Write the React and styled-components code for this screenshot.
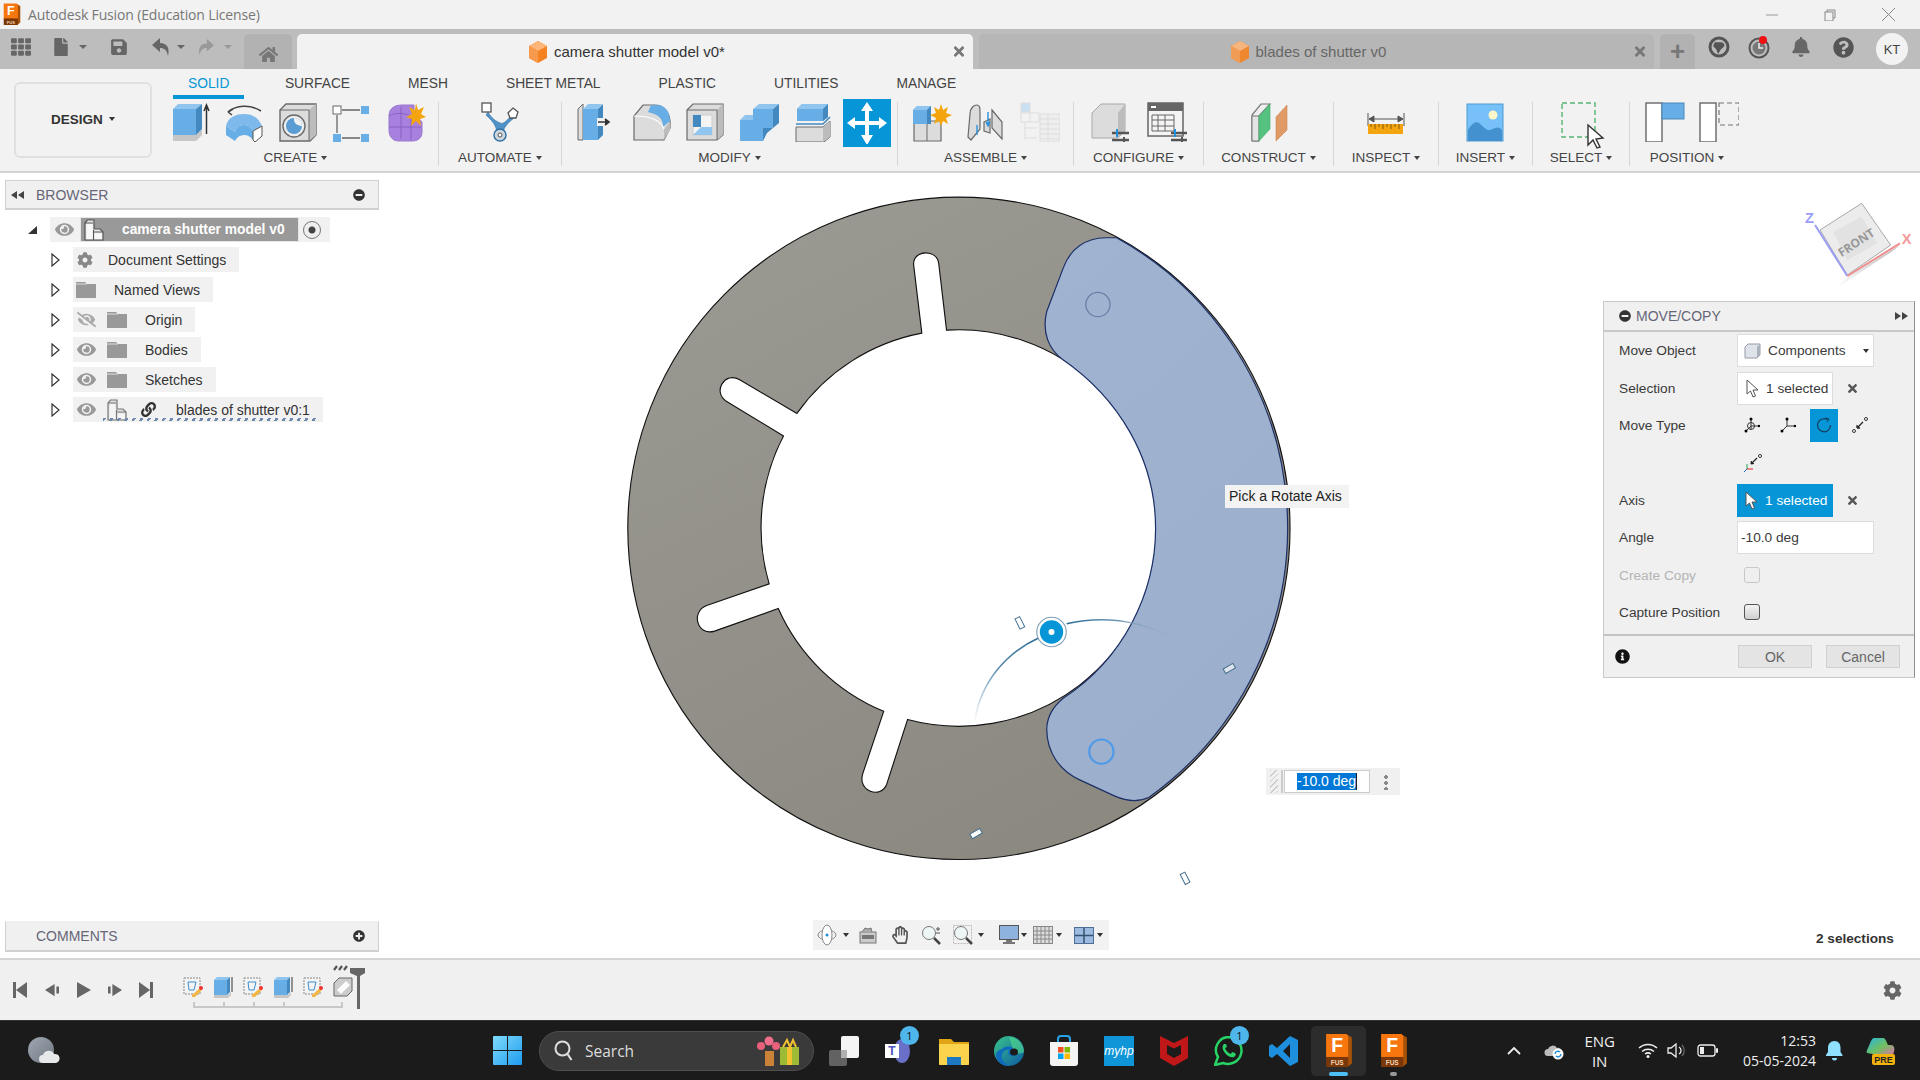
import React from 'react';
import styled, { createGlobalStyle } from 'styled-components';
import {
  FaBell, FaCog, FaEye, FaEyeSlash, FaFile, FaHome, FaInfoCircle, FaLink, FaMinusCircle,
  FaPlusCircle, FaQuestionCircle, FaRegHandPaper, FaSave, FaTh, FaTimes,
} from 'react-icons/fa';

const Global = createGlobalStyle`
  html, body { margin: 0; padding: 0; background: #fff; }
  * { box-sizing: border-box; }
  body { font-family: "Liberation Sans", Arial, sans-serif; }
`;

const Screen = styled.div`
  width: 1920px;
  height: 1080px;
  display: flex;
  flex-direction: column;
  overflow: hidden;
  color: #444;
`;

/* ---------- title bar ---------- */
const TitleBar = styled.div`
  height: 29px;
  background: #f2f2f2;
  display: flex;
  align-items: center;
  padding-left: 3px;
`;
const TitleText = styled.span`
  margin-left: 7px;
  font: 14px "Open Sans", sans-serif;
  letter-spacing: -0.15px;
  color: #777;
`;
const WinControls = styled.div`
  margin-left: auto;
  display: flex;
  align-items: center;
  padding-right: 25px;
  gap: 46px;
  color: #888;
`;

/* ---------- tab strip ---------- */
const TabStrip = styled.div`
  height: 40px;
  background: #bdbdbd;
  display: flex;
  align-items: flex-end;
  padding-left: 11px;
`;
const ToolIcon = styled.div`
  height: 40px;
  display: flex;
  align-items: center;
  margin-left: ${p => p.$ml || 0}px;
  color: ${p => p.$color || '#666'};
  font-size: ${p => p.$size || 18}px;
  padding-bottom: 4px;
`;
const Caret = styled.i`
  display: inline-block;
  width: 0;
  height: 0;
  border-left: ${p => p.$s || 3.5}px solid transparent;
  border-right: ${p => p.$s || 3.5}px solid transparent;
  border-top: ${p => (p.$s || 3.5) * 1.2}px solid ${p => p.$color || '#444'};
  margin-left: ${p => p.$ml ?? 4}px;
  vertical-align: middle;
`;
const HomeTab = styled.div`
  width: 48px;
  height: 35px;
  margin-left: 12px;
  background: #b2b2b2;
  border-radius: 5px 5px 0 0;
  display: flex;
  align-items: center;
  justify-content: center;
  padding-top: 6px;
  color: #777;
  font-size: 19px;
`;
const Tab = styled.div`
  width: ${p => p.$w}px;
  height: 35px;
  margin-left: ${p => p.$ml}px;
  background: ${p => (p.$active ? '#f2f2f2' : '#b6b6b6')};
  border-radius: 5px 5px 0 0;
  display: flex;
  align-items: center;
  padding-left: 4px;
  padding-right: 7px;
  font-size: 15px;
  color: ${p => (p.$active ? '#333' : '#666')};
`;
const TabLabel = styled.div`
  flex: 1;
  display: flex;
  align-items: center;
  justify-content: center;
  gap: 6px;
`;
const TabClose = styled.div`
  width: 14px;
  display: flex;
  justify-content: center;
  color: #777;
`;
const PlusTab = styled(HomeTab)`
  width: 35px;
  margin-left: 6px;
  padding-top: 0;
  font-size: 26px;
  font-weight: 700;
`;
const Avatar = styled.div`
  width: 32px;
  height: 32px;
  border-radius: 50%;
  background: #f2f2f2;
  margin-left: 22px;
  margin-bottom: 4px;
  display: flex;
  align-items: center;
  justify-content: center;
  color: #444;
  font-size: 13px;
`;

/* ---------- ribbon ---------- */
const Ribbon = styled.div`
  height: 104px;
  background: #f2f2f2;
  border-bottom: 2px solid #d4d4d4;
  display: flex;
`;
const DesignButton = styled.div`
  width: 138px;
  height: 76px;
  margin: 13px 0 0 14px;
  padding-bottom: 2px;
  border: 2px solid #e0e0e0;
  border-radius: 6px;
  display: flex;
  align-items: center;
  justify-content: center;
  font-size: 13.5px;
  font-weight: 700;
  color: #333;
`;
const RibbonMain = styled.div`
  display: flex;
  flex-direction: column;
`;
const RibbonTabs = styled.div`
  height: 30px;
  display: flex;
  padding-left: 12px;
  margin-left: 9px;
`;
const RibbonTab = styled.div`
  height: 30px;
  padding: 7px 15px 0;
  margin-right: ${p => (p.$active ? 25.500 : 28)}px;
  font-size: 13.8px;
  line-height: 15px;
  color: ${p => (p.$active ? '#0696d7' : '#444')};
  border-bottom: 4px solid ${p => (p.$active ? '#0696d7' : 'transparent')};
`;
const Groups = styled.div`
  display: flex;
  padding-left: 9px;
`;
const Group = styled.div`
  width: ${p => p.$w}px;
  height: 64px;
  margin-top: 3px;
  padding-right: ${p => p.$pr || 0}px;
  border-right: ${p => (p.$last ? 'none' : '1.5px solid #d6d6d6')};
  display: flex;
  flex-direction: column;
  align-items: center;
`;
const GroupIcons = styled.div`
  height: 47px;
  display: flex;
  align-items: flex-start;
  gap: ${p => p.$gap ?? 14}px;
  margin-left: ${p => p.$ml || 0}px;
`;
const GroupLabel = styled.div`
  font-size: 13.5px;
  line-height: 17px;
  color: #444;
  white-space: nowrap;
`;
const RIcon = styled.svg`
  width: 40px;
  height: 40px;
  flex: none;
  margin-left: ${p => p.$ml || 0}px;
`;
const ActiveTool = styled.div`
  width: 48px;
  height: 48px;
  margin: -3px 0 0 -4px;
  background: #0696d7;
  display: flex;
  align-items: center;
  justify-content: center;
`;

const R = ({ children, $ml }) => <RIcon viewBox="0 0 40 40" $ml={$ml}>{children}</RIcon>;
const BLUE = '#68aee6', DK = '#4389c0', LT = '#8fc5ee', GL = '#dcdcdc', GM = '#bcbcbc', ST = '#6a6a6a';

const Extrude = () => (
  <R>
    <path d="M3 33h23l6-6v6l-6 6H3z" fill="#c6c6c6" />
    <rect x="3" y="7" width="23" height="26" fill={BLUE} />
    <path d="M3 7l5-5h24l-6 5z" fill={LT} />
    <path d="M26 7l6-5v25l-6 6z" fill={DK} />
    <path d="M36.5 32V4M34 9l2.500-6L39 9" stroke="#333" strokeWidth="1.500" fill="none" />
  </R>
);
const Revolve = () => (
  <R>
    <path d="M2 24C4 15 12 12 20 12s14 3 18 12l-9 5c-2-4-5-6-9-6s-8 2-9 7z" fill="#7dbaeb" />
    <path d="M2 24l9 6c1-5 5-7 9-7s7 2 9 6v9c-2-3-5-5-9-5s-7 2-9 6l-9-6z" fill={BLUE} />
    <path d="M29 29l9-5v10l-7 6-2-2z" fill="#fff" stroke="#555" />
    <path d="M4 10C12 3 26 2 37 9" stroke="#444" strokeWidth="1.500" fill="none" />
    <path d="M4 10l5-3M4 10l4 3" stroke="#444" strokeWidth="1.500" fill="none" />
  </R>
);
const Hole = () => (
  <R>
    <path d="M2 8l6-6h30v31l-6 6H2z" fill={GL} stroke={ST} strokeWidth="1.400" />
    <path d="M31 8l7-6v31l-7 6z" fill={GM} />
    <path d="M2 8h29v31" stroke={ST} fill="none" />
    <circle cx="16" cy="24" r="11" fill="#eee" stroke={ST} strokeWidth="1.400" />
    <circle cx="16" cy="24" r="8" fill="#5a9dd4" />
    <path d="M16 16a8 8 0 0 1 8 8c-3 0-9-2-8-8z" fill="#f2f2f2" />
  </R>
);
const SketchBox = () => (
  <R>
    <rect x="1" y="4" width="8" height="8" fill="#fff" stroke="#666" />
    <rect x="29" y="4" width="8" height="8" fill={BLUE} />
    <rect x="1" y="32" width="8" height="8" fill={BLUE} />
    <rect x="29" y="32" width="8" height="8" fill={BLUE} />
    <path d="M10 8h18M5 13v18M10 36h18" stroke="#666" strokeWidth="1.300" />
  </R>
);
const FormIcon = () => (
  <R>
    <path d="M3 14C3 6 9 3 16 3h12v8l8 9v10c0 6-4 9-10 9H13C6 39 3 34 3 28z" fill="#a781dd" stroke="#9a78cf" />
    <path d="M3 14c6-4 16-3 22 0M15 5v32M3 25h32M25 14v24" stroke="#8a63c4" strokeWidth="1" fill="none" />
    <path d="M30 1l2 7 6-3-3 7 5 3-6 2 1 7-5-5-5 5 1-7-6-2 6-3-3-7 6 3z" fill="#f4a50e" />
  </R>
);
const AutomateIcon = () => (
  <R>
    <path d="M8 10c4 7 8 9 12 11s8-4 12-8l2 3c-4 3-8 7-10 11l-1 5h-6l-1-6C14 20 9 16 6 13z" fill="#4f92c8" stroke="#2f6fa3" strokeWidth=".6" />
    <rect x="2" y="1" width="9" height="9" fill="#fff" stroke="#555" strokeWidth="1.300" />
    <path d="M33 6l5 4-2 6-6 0-2-5z" fill="#fff" stroke="#555" strokeWidth="1.300" />
    <circle cx="20" cy="33" r="6" fill="#cfd6dc" stroke="#2f6fa3" strokeWidth="1.400" />
    <circle cx="20" cy="33" r="2" fill="#fff" stroke="#555" />
  </R>
);
const PressPull = () => (
  <R>
    <path d="M6 7l5-5v36H6z" fill={GL} stroke={ST} />
    <path d="M11 7h15v31H11z" fill={BLUE} />
    <path d="M11 7l5-5h14l-4 5z" fill={LT} />
    <path d="M26 7l5-5v31l-5 5z" fill={DK} />
    <rect x="25" y="16" width="13" height="8" fill="#f2f2f2" />
    <path d="M26 20h10M33 17l4 3-4 3" stroke="#333" strokeWidth="1.600" fill="#333" />
  </R>
);
const Fillet = () => (
  <>
    <path d="M3 38V14l9-11h12c8 0 14 6 15 16v7l-6 12z" fill={GL} stroke={ST} strokeWidth="1.200" />
    <path d="M20 3h6c8 0 13 7 13 16l-7 6c0-8-4-12-12-14l-3-1z" fill={BLUE} />
    <path d="M33 38v-11l6-7v8z" fill={GM} />
    <path d="M3 14c13 0 26 2 30 13" stroke="#fff" strokeWidth="1.200" fill="none" />
  </>
);
const Shell = () => (
  <R>
    <path d="M2 8l6-6h30v31l-6 5H2z" fill={GL} stroke={ST} strokeWidth="1.200" />
    <path d="M32 8l6-6v31l-6 5z" fill={GM} />
    <path d="M2 8h30v30" stroke={ST} fill="none" />
    <rect x="8" y="13" width="19" height="20" fill="#f4f4f4" stroke="#ccc" />
    <path d="M8 13h8v12H8z" fill={DK} />
    <path d="M8 33l8-8h11v8z" fill={LT} />
  </R>
);
const Combine = () => (
  <R>
    <path d="M1 18h13V7h20v19H24v13H1z" fill={BLUE} />
    <path d="M14 7l6-5h20l-6 5z" fill={LT} />
    <path d="M1 18l5-5h8v5z" fill={LT} />
    <path d="M34 7l6-5v19l-6 5z" fill={DK} />
    <path d="M24 26h10l-6 5-4 8z" fill={DK} />
  </R>
);
const SplitBody = () => (
  <R>
    <path d="M4 7l5-5h26v13l-5 4H4z" fill={BLUE} />
    <path d="M4 7l5-5h26l-5 5z" fill={LT} />
    <path d="M30 7l5-5v13l-5 4z" fill={DK} />
    <path d="M3 22h27l7-7" stroke={DK} strokeWidth="1.600" fill="none" />
    <path d="M3 25h27l7-6v16l-6 5H3z" fill={GL} stroke={ST} />
    <path d="M30 25l7-6v16l-7 5z" fill={GM} />
  </R>
);
const MoveArrows = () => (
  <svg width="40" height="42" viewBox="0 0 40 42">
    <path fill="#fff" d="M20 0l6 9h-4v10h10v-4l8 6-8 6v-4H22v10h4l-6 10-6-10h4V23H8v4L0 21l8-6v4h10V9h-4z" />
  </svg>
);
const NewComponent = () => (
  <R>
    <path d="M2 22l3-3h24v20H2z" fill={GL} stroke={ST} strokeWidth="1.200" />
    <path d="M15 22v17" stroke={ST} />
    <path d="M1 22V8l4-4h14v18z" fill={BLUE} />
    <path d="M1 8l4-4h14l-4 4z" fill={LT} />
    <path d="M15 8l4-4v18h-4z" fill={DK} />
    <path d="M29 2l2 6 5-3-2 6 6 2-6 3 2 6-5-3-2 5-2-5-5 3 2-6-6-3 6-2-2-6 5 3z" fill="#f4a50e" />
  </R>
);
const Joint = () => (
  <R>
    <path d="M4 12c0-6 4-9 7-9s3 3 3 8v16l-9 11-3-3z" fill={GL} stroke={ST} strokeWidth="1.200" />
    <path d="M18 20l6-3v14l-6-2zM26 8l10 12v17L26 26z" fill={GL} stroke={ST} strokeWidth="1.200" />
    <path d="M11 23v10M22 10v12M20 20l2 4 2-4" stroke="#2a8fdb" strokeWidth="1.400" fill="none" />
  </R>
);
const TableFaded = () => (
  <R>
    <rect x="1" y="1" width="9" height="9" fill="#c9dff2" stroke="#ddd" />
    <path d="M1 11h18v9H1zM10 11v9M5 20v18M5 26h12M5 36h12" stroke="#ddd" fill="none" />
    <rect x="20" y="12" width="20" height="28" fill="#eee" stroke="#ddd" />
    <path d="M20 17h20M20 22h20M20 27h20M20 32h20M20 37h20M28 12v28" stroke="#ddd" />
  </R>
);
const ConfigCube = () => (
  <R>
    <path d="M2 11l9-9h24v27l-7 7H2z" fill={GL} stroke="#a8a8a8" />
    <path d="M28 11l7-9v27l-7 7z" fill={GM} />
    <path d="M22 31h17M22 38h17" stroke="#555" strokeWidth="2.500" />
    <path d="M27 27v8" stroke="#1e90e0" strokeWidth="2" />
    <path d="M34 35v5" stroke="#555" strokeWidth="2" />
  </R>
);
const ConfigTable = () => (
  <R>
    <rect x="1" y="1" width="35" height="33" fill="#f4f4f4" stroke="#666" strokeWidth="1.500" />
    <rect x="1" y="1" width="35" height="8" fill="#666" />
    <rect x="4" y="4" width="5" height="2" fill="#fff" />
    <path d="M5 13h22v16H5zM5 18h22M5 24h22M11 13v16M18 13v16" stroke="#666" fill="none" />
    <path d="M24 31h16M24 38h16" stroke="#555" strokeWidth="2.500" />
    <path d="M28 27v8" stroke="#1e90e0" strokeWidth="2" />
    <path d="M35 35v5" stroke="#555" strokeWidth="2" />
  </R>
);
const Construct = () => (
  <R>
    <path d="M3 39V13L12 2h9L10 14v25z" fill="#eee" stroke="#777" strokeWidth="1.200" />
    <path d="M3 14h7v25H3z" fill="#e4e4e4" stroke="#777" />
    <path d="M10 39V14L21 2v25z" fill="#55c27f" stroke="#3fa868" strokeWidth=".6" />
    <path d="M27 39V15L38 3v25z" fill="#e09a66" stroke="#c98450" strokeWidth=".6" />
  </R>
);
const Measure = () => (
  <R>
    <path d="M2 11v13M38 11v13M3 17h34M3 17l5-3v6zM37 17l-5-3v6z" stroke="#555" fill="#555" strokeWidth="1" />
    <rect x="2" y="22" width="35" height="10" fill="#f3a40e" />
    <path d="M5 22v3M9 22v5M13 22v3M17 22v5M21 22v3M25 22v5M29 22v3M33 22v5" stroke="#7d5a10" />
  </R>
);
const InsertImg = () => (
  <R>
    <rect x="1" y="2" width="36" height="37" fill="#78c0f8" stroke="#4c9bd6" />
    <circle cx="27" cy="13" r="4.500" fill="#fdf7c9" />
    <path d="M2 39V28c4-7 8-9 11-7s7 8 11 7 8-5 12 0v11z" fill="#4392cf" />
  </R>
);
const SelectIcon = () => (
  <RIcon viewBox="0 0 40 40" style={{ overflow: 'visible' }}>
    <rect x="1" y="1" width="33" height="34" fill="none" stroke="#55b573" strokeWidth="1.400" strokeDasharray="5 3" />
    <path d="M27 23v20l5-5 4 8 3-1-4-8 7-1z" fill="#fff" stroke="#333" strokeWidth="1.400" />
  </RIcon>
);
const PosA = () => (
  <R>
    <rect x="1" y="1" width="16" height="39" fill="#fff" stroke="#666" strokeWidth="1.400" />
    <rect x="17" y="1" width="22" height="16" fill={BLUE} stroke="#4a88b9" />
  </R>
);
const PosB = () => (
  <R>
    <rect x="1" y="1" width="16" height="39" fill="#fff" stroke="#666" strokeWidth="1.400" />
    <rect x="20" y="1" width="20" height="22" fill="none" stroke="#777" strokeWidth="1.200" strokeDasharray="5 3" />
  </R>
);
const OrangeCube = ({ faded }) => (
  <svg width="20" height="22" viewBox="0 0 20 22" style={{ opacity: faded ? 0.9 : 1 }}>
    <path d="M10 0l9 5v12l-9 5-9-5V5z" fill="#f58220" />
    <path d="M10 0l9 5-9 5-9-5z" fill="#fdb579" />
    <path d="M1 5l9 5v12l-9-5z" fill="#f79a4b" />
  </svg>
);

/* ---------- canvas ---------- */
const Canvas = styled.div`
  flex: 1;
  position: relative;
  background: #fff;
  display: flex;
  justify-content: space-between;
`;
const LeftColumn = styled.div`
  width: 374px;
  margin-left: 5px;
  padding: 7px 0 6px;
  display: flex;
  flex-direction: column;
  justify-content: space-between;
  position: relative;
  z-index: 2;
`;
const PanelHead = styled.div`
  height: ${p => p.$h}px;
  background: #f0f0f0;
  border: 1px solid #d0d0d0;
  border-bottom-width: 2px;
  border-top-color: ${p => (p.$open ? '#f0f0f0' : '#d0d0d0')};
  display: flex;
  align-items: center;
  padding: 0 13px 0 5px;
  font-size: 14px;
  color: #667;
`;
const HeadTitle = styled.span`
  margin-left: ${p => p.$ml}px;
  flex: 1;
`;
const RoundBtn = styled.span`
  display: flex;
  color: #333;
  font-size: 12px;
`;
const Tree = styled.div`
  padding-top: 7px;
  display: flex;
  flex-direction: column;
  gap: 5px;
`;
const TreeRow = styled.div`
  height: 25px;
  display: flex;
  align-items: center;
  padding-left: ${p => p.$indent}px;
`;
const Expander = styled.svg`
  width: 22px;
  height: 14px;
  flex: none;
`;
const RowBody = styled.div`
  position: relative;
  height: 25px;
  background: #f1f1f1;
  display: flex;
  align-items: center;
  padding: 0 13px 0 3px;
  font-size: 14px;
  color: #333;
  white-space: nowrap;
`;
const RootBody = styled(RowBody)`
  padding: 0 9px 0 4px;
`;
const RowSlot = styled.span`
  display: flex;
  align-items: center;
  justify-content: center;
  width: ${p => p.$w || 20}px;
  margin-left: ${p => p.$ml || 0}px;
  color: ${p => p.$color || '#999'};
  font-size: ${p => p.$size || 19}px;
`;
const RowText = styled.span`
  margin-left: ${p => p.$ml}px;
`;
const RootSelected = styled.div`
  height: 23px;
  width: 217px;
  margin-left: 7px;
  background: #999;
  display: flex;
  align-items: center;
  padding-left: 3px;
  color: #fff;
  font-weight: 700;
  font-size: 13.8px;
  box-shadow: 0 0 0 1px #e6e6e6;
`;
const RootName = styled.span`
  margin-left: 18px;
`;
const Radio = styled.span`
  width: 18px;
  height: 18px;
  margin-left: 5px;
  border-radius: 50%;
  border: 1.5px solid #777;
  background: radial-gradient(circle, #444 0 3px, #eee 4px);
`;
const WavyLine = styled.span`
  position: absolute;
  left: 30px;
  right: 7px;
  bottom: 1px;
  height: 3px;
  background: repeating-linear-gradient(120deg, #6d87ad 0 2.5px, transparent 2.5px 6.5px);
`;

const Model = styled.svg`
  position: absolute;
  left: 620px;
  top: 17px;
  width: 680px;
  height: 720px;
  overflow: visible;
`;
const Tooltip = styled.div`
  position: absolute;
  left: 1225px;
  top: 312px;
  height: 23px;
  width: 124px;
  background: #f3f3f3;
  font-size: 14px;
  line-height: 23px;
  padding-left: 4px;
  color: #222;
  white-space: nowrap;
`;
const AngleBox = styled.div`
  position: absolute;
  left: 1266px;
  top: 595px;
  width: 134px;
  height: 27px;
  background: #f0f0f0;
  display: flex;
  align-items: center;
`;
const Grip = styled.span`
  width: 13px;
  height: 23px;
  margin-left: 4px;
  border-right: 2px solid #ccc;
  background: repeating-linear-gradient(135deg, #ccc 0 1px, transparent 1px 4px) left / 8px 100% no-repeat;
`;
const AngleInput = styled.div`
  width: 86px;
  height: 23px;
  margin-left: 1px;
  background: #fff;
  border: 1px solid #ccc;
  display: flex;
  align-items: center;
  padding-left: 12px;
  font-size: 14px;
`;
const SelectedText = styled.span`
  background: #0078d7;
  color: #fff;
  line-height: 17px;
  border-right: 1.5px solid #222;
`;
const DotMenu = styled.span`
  width: 4px;
  height: 16px;
  margin-left: 14px;
  background: radial-gradient(circle, #888 0 1.9px, transparent 2.1px) 0 0 / 4px 6px;
`;
const ViewCube = styled.svg`
  position: absolute;
  left: 1760px;
  top: 7px;
  width: 160px;
  height: 120px;
`;
const NavBar = styled.div`
  position: absolute;
  left: 813px;
  bottom: 8px;
  width: 296px;
  height: 30px;
  background: #f2f2f2;
  display: flex;
  align-items: center;
  padding-left: 4px;
`;
const NavItem = styled.span`
  display: flex;
  align-items: center;
  margin-left: ${p => p.$ml || 0}px;
  color: #555;
  font-size: 18px;
`;
const SelectionCount = styled.div`
  position: absolute;
  left: 1816px;
  bottom: 12px;
  font-size: 13.6px;
  font-weight: 700;
  color: #333;
`;

/* ---------- move / copy panel ---------- */
const MovePanel = styled.div`
  width: 312px;
  height: 377px;
  margin: 128px 5px 0 0;
  background: #f0f0f0;
  border: 1px solid #c8c8c8;
  border-right-color: #8e8e8e;
  display: flex;
  flex-direction: column;
  position: relative;
  z-index: 2;
`;
const MoveHead = styled.div`
  height: 30px;
  border-bottom: 2px solid #c8c8c8;
  display: flex;
  align-items: center;
  padding: 0 6px 0 15px;
  font-size: 14px;
  color: #667;
`;
const FormBody = styled.div`
  height: 302px;
  flex: none;
`;
const FormRow = styled.div`
  height: 37.4px;
  display: flex;
  align-items: center;
  padding-left: 15px;
  font-size: 13.7px;
  color: ${p => (p.$off ? '#b5b5b5' : '#3a3a3a')};
`;
const FormLabel = styled.span`
  width: ${p => p.$w || 118}px;
  flex: none;
`;
const Control = styled.div`
  width: ${p => p.$w}px;
  height: 33px;
  display: flex;
  align-items: center;
  background: ${p => (p.$blue ? '#0696d7' : '#fff')};
  color: ${p => (p.$blue ? '#fff' : '#3a3a3a')};
  border: ${p => (p.$blue ? 'none' : '1.5px solid #dcdcdc')};
  padding-left: ${p => p.$pl ?? 8}px;
`;
const ClearBtn = styled.span`
  margin-left: 13px;
  display: flex;
  color: #555;
  font-size: 13px;
`;
const TypeButton = styled.span`
  width: 28px;
  height: 33px;
  display: flex;
  align-items: center;
  justify-content: center;
  margin-right: 8px;
  background: ${p => (p.$on ? '#0696d7' : 'transparent')};
`;
const CheckBox = styled.span`
  width: 16px;
  height: 16px;
  margin-left: 7px;
  border-radius: 3px;
  border: 1.5px solid ${p => (p.$off ? '#c8c8c8' : '#555')};
  background: ${p => (p.$off ? '#efefef' : 'linear-gradient(#f4f4f4, #cfcfcf)')};
`;
const MoveFoot = styled.div`
  flex: 1;
  border-top: 2px solid #c4c4c4;
  display: flex;
  align-items: center;
  padding-left: 11px;
`;
const InfoIcon = styled.span`
  display: flex;
  font-size: 15px;
  color: #111;
  margin-right: 108px;
`;
const DlgButton = styled.button`
  width: 75px;
  height: 23px;
  margin-right: 14px;
  padding: 0;
  background: #e4e4e4;
  border: 1.5px solid #d0d0d0;
  color: #666;
  font: 14px "Liberation Sans", Arial, sans-serif;
`;

/* ---------- timeline ---------- */
const Timeline = styled.div`
  height: 62px;
  background: #f0f0f0;
  border-top: 2px solid #d4d4d4;
  display: flex;
  align-items: center;
  padding: 0 18px 0 13px;
`;
const Transport = styled.svg`
  width: 14px;
  height: 16px;
  margin-right: ${p => p.$mr}px;
  flex: none;
`;
const Steps = styled.div`
  margin-left: 29.500px;
  position: relative;
  display: flex;
  gap: 10px;
  padding-bottom: 6px;
`;
const StepIcon = styled.svg`
  width: 20px;
  height: 22px;
`;
const StepBracket = styled.span`
  position: absolute;
  left: 10px;
  right: 10px;
  bottom: -4px;
  height: 6px;
  border: 2px solid #c8c8c8;
  border-top: none;
  &::before {
    content: '';
    position: absolute;
    inset: 0 30px 0 28px;
    background: repeating-linear-gradient(90deg, #c8c8c8 0 2px, transparent 2px 30px);
  }
`;
const Marker = styled.svg`
  position: absolute;
  left: 165px;
  top: -13px;
  width: 20px;
  height: 46px;
  overflow: visible;
`;
const Gear = styled.span`
  margin-left: auto;
  display: flex;
  color: #666;
  font-size: 19px;
`;

/* ---------- taskbar ---------- */
const Taskbar = styled.div`
  height: 60px;
  background: #1b1b1b;
  border-top: 1px solid #333;
  display: grid;
  grid-template-columns: 493px auto 1fr;
  align-items: center;
  font-family: "Open Sans", "Noto Sans", sans-serif;
  color: #eee;
`;
const TaskCenter = styled.div`
  display: flex;
  align-items: center;
`;
const SearchPill = styled.div`
  width: 275px;
  height: 40px;
  margin: 0 2px 0 17px;
  border-radius: 20px;
  background: #3a3a3a;
  border: 1px solid #4e4e4e;
  display: flex;
  align-items: center;
  padding-left: 14px;
  font-size: 15.5px;
  color: #ddd;
`;
const SearchText = styled.span`
  margin-left: 11px;
  flex: 1;
`;
const TaskSlot = styled.div`
  width: 55px;
  height: 50px;
  position: relative;
  display: flex;
  align-items: center;
  justify-content: center;
  border-radius: 5px;
  background: ${p => (p.$active ? '#2c2c2c' : 'transparent')};
`;
const Badge = styled.span`
  position: absolute;
  top: 0;
  left: 29px;
  width: 19px;
  height: 19px;
  border-radius: 50%;
  background: #4fb6ec;
  color: #111;
  font-size: 11px;
  line-height: 19px;
  text-align: center;
`;
const RunDot = styled.span`
  position: absolute;
  bottom: 0;
  left: 50%;
  height: 4px;
  width: ${p => (p.$wide ? 19 : 7)}px;
  margin-left: ${p => (p.$wide ? -9.5 : -3.5)}px;
  border-radius: 2px;
  background: ${p => (p.$wide ? '#4fc0f5' : '#999')};
`;
const Tray = styled.div`
  display: flex;
  align-items: center;
  justify-content: flex-end;
  padding-right: 25px;
`;
const TrayItem = styled.span`
  display: flex;
  flex-direction: column;
  align-items: ${p => p.$align || 'center'};
  margin-left: ${p => p.$ml}px;
  font-size: ${p => p.$size || 14}px;
  line-height: 20px;
  color: #eee;
  white-space: nowrap;
`;

const FusionLogo = ({ size = 30 }) => (
  <svg width={size} height={size * 1.25} viewBox="0 0 30 38">
    <path d="M2 2l22 0 5 3v28l-5 4H2z" fill="#a65208" />
    <path d="M1 1h22l2 2v24H1z" fill="#f7760e" />
    <rect x="1" y="26" width="24" height="11" fill="#7a3708" />
    <text x="13" y="21" textAnchor="middle" fontSize="21" fontWeight="700" fill="#fff" fontFamily="Liberation Sans">F</text>
    <text x="13" y="35" textAnchor="middle" fontSize="7" fontWeight="700" fill="#f5d5b5" fontFamily="Liberation Sans">FUS</text>
  </svg>
);
const SmallPointer = ({ color = '#fff', stroke = '#555' }) => (
  <svg width="13" height="19" viewBox="0 0 13 19">
    <path d="M1 1v14l3.500-3 2.500 6 2.500-1-2.500-6h5z" fill={color} stroke={stroke} strokeWidth="1" />
  </svg>
);
const Folder = ({ w = 20 }) => (
  <svg width={w} height="16" viewBox="0 0 20 16">
    <path d="M0 0h9l2 2h9v14H0z" fill="#999" />
    <path d="M0 2h11" stroke="#f1f1f1" strokeWidth=".8" />
  </svg>
);
const ComponentIcon = ({ stroke = '#777', fill = '#dfdfdf', shade = '#f4f4f4' }) => (
  <svg width="20" height="22" viewBox="0 0 20 22">
    <path d="M1 21V4l2.500-3h6.500v9h6l3 3v8z" fill={fill} stroke={stroke} strokeWidth="1.200" />
    <path d="M9.500 21V11M1 4h8M9.500 13h9.500" stroke={stroke} fill="none" />
    <rect x="2.500" y="5" width="6" height="15" fill={shade} />
    <rect x="11" y="14.500" width="7" height="5.500" fill={shade} />
  </svg>
);
const StepSketch = () => (
  <StepIcon viewBox="0 0 20 22">
    <rect x="1" y="2" width="16" height="16" fill="#f4f4f4" stroke="#888" strokeDasharray="2 1" />
    <path d="M5 6h8l-2 8H6z" fill="none" stroke="#3a8fd0" />
    <path d="M9 19l8-7 2 2-7 7-3 0z" fill="#f4b642" />
    <circle cx="18" cy="12" r="2" fill="#e33" />
  </StepIcon>
);
const StepExtrude = () => (
  <StepIcon viewBox="0 0 20 22">
    <path d="M1 19h14l3-3v3l-3 3H1z" fill="#c6c6c6" />
    <rect x="1" y="4" width="13" height="15" fill={BLUE} />
    <path d="M1 4l3-3h13l-3 3z" fill={LT} />
    <path d="M14 4l3-3v15l-3 3z" fill={DK} />
    <path d="M19 16V1" stroke="#333" />
  </StepIcon>
);

const treeRows = [
  { key: 'named', folderOnly: true, label: 'Named Views', ml: 18 },
  { key: 'origin', eyeOff: true, label: 'Origin', ml: 18 },
  { key: 'bodies', label: 'Bodies', ml: 18 },
  { key: 'sketches', label: 'Sketches', ml: 18 },
];
const Arrow = () => (
  <Expander viewBox="0 0 22 14">
    <path d="M1 1l7 6-7 6z" fill="#fff" stroke="#333" strokeWidth="1.200" />
  </Expander>
);
const Eye = ({ off }) => <RowSlot $w={20} $color={off ? '#aaa' : '#999'}>{off ? <FaEyeSlash /> : <FaEye />}</RowSlot>;

const ribbonTabs = ['SOLID', 'SURFACE', 'MESH', 'SHEET METAL', 'PLASTIC', 'UTILITIES', 'MANAGE'];

const App = () => (
  <Screen>
    <Global />
    <TitleBar>
      <FusionLogo size={18} />
      <TitleText>Autodesk Fusion (Education License)</TitleText>
      <WinControls>
        <svg width="12" height="2" viewBox="0 0 12 2"><path d="M0 1h12" stroke="#999" /></svg>
        <svg width="12" height="12" viewBox="0 0 12 12"><rect x="1" y="3" width="8" height="9" fill="none" stroke="#888" /><path d="M3 3V1h8v8H9" fill="none" stroke="#888" /></svg>
        <svg width="13" height="13" viewBox="0 0 13 13"><path d="M0 0l13 13M13 0L0 13" stroke="#888" /></svg>
      </WinControls>
    </TitleBar>

    <TabStrip>
      <ToolIcon $size={20}><FaTh /></ToolIcon>
      <ToolIcon $ml={21}><FaFile /><Caret $ml={9} $color="#666" $s={4} /></ToolIcon>
      <ToolIcon $ml={23}><FaSave /></ToolIcon>
      <ToolIcon $ml={24}>
        <svg width="19" height="18" viewBox="0 0 19 18"><path d="M8 0L0 7l8 7v-4c4 0 7 2 8 8 2-8-1-13-8-13z" fill="#666" /></svg>
        <Caret $ml={6} $color="#666" $s={4} />
      </ToolIcon>
      <ToolIcon $ml={12}>
        <svg width="17" height="18" viewBox="0 0 19 18"><path d="M11 0l8 7-8 7v-4c-4 0-7 2-8 8-2-8 1-13 8-13z" fill="#999" /></svg>
        <Caret $ml={10} $color="#999" $s={4} />
      </ToolIcon>
      <HomeTab><FaHome /></HomeTab>
      <Tab $active $w={676} $ml={5}>
        <TabLabel><OrangeCube />camera shutter model v0*</TabLabel>
        <TabClose><FaTimes /></TabClose>
      </Tab>
      <Tab $w={675} $ml={6}>
        <TabLabel><OrangeCube faded />blades of shutter v0</TabLabel>
        <TabClose><FaTimes /></TabClose>
      </Tab>
      <PlusTab>+</PlusTab>
      <ToolIcon $ml={13} $size={20}>
        <svg width="22" height="22" viewBox="0 0 22 22"><circle cx="11" cy="11" r="9" fill="none" stroke="#555" strokeWidth="3" /><path d="M7 6c3 1 7-1 9 2s-3 4-4 7l-2 3-2-5-3-3z" fill="#555" /></svg>
      </ToolIcon>
      <ToolIcon $ml={18}>
        <svg width="22" height="24" viewBox="0 0 22 24"><circle cx="11" cy="13" r="9.500" fill="none" stroke="#555" strokeWidth="2" /><circle cx="11" cy="13" r="6.500" fill="#777" /><path d="M11 8v5h4" stroke="#eee" strokeWidth="1.500" fill="none" /><circle cx="15" cy="5" r="4" fill="#e11" /></svg>
      </ToolIcon>
      <ToolIcon $ml={21} $size={20}><FaBell /></ToolIcon>
      <ToolIcon $ml={22} $size={21} $color="#555"><FaQuestionCircle /></ToolIcon>
      <Avatar>KT</Avatar>
    </TabStrip>

    <Ribbon>
      <DesignButton>DESIGN<Caret $ml={6} $color="#333" /></DesignButton>
      <RibbonMain>
        <RibbonTabs>
          {ribbonTabs.map((t, i) => <RibbonTab key={t} $active={i === 0}>{t}</RibbonTab>)}
        </RibbonTabs>
        <Groups>
          <Group $w={278} $pr={8}>
            <GroupIcons $ml={4}><Extrude /><Revolve /><Hole /><SketchBox /><FormIcon /></GroupIcons>
            <GroupLabel>CREATE<Caret /></GroupLabel>
          </Group>
          <Group $w={123}>
            <GroupIcons><AutomateIcon /></GroupIcons>
            <GroupLabel>AUTOMATE<Caret /></GroupLabel>
          </Group>
          <Group $w={336}>
            <GroupIcons $ml={4}>
              <PressPull /><R $ml={5}><Fillet /></R><Shell /><Combine /><SplitBody />
              <ActiveTool><MoveArrows /></ActiveTool>
            </GroupIcons>
            <GroupLabel>MODIFY<Caret /></GroupLabel>
          </Group>
          <Group $w={176}>
            <GroupIcons><NewComponent /><Joint /><TableFaded /></GroupIcons>
            <GroupLabel>ASSEMBLE<Caret /></GroupLabel>
          </Group>
          <Group $w={130}>
            <GroupIcons $gap={17}><ConfigCube /><ConfigTable /></GroupIcons>
            <GroupLabel>CONFIGURE<Caret /></GroupLabel>
          </Group>
          <Group $w={130}>
            <GroupIcons><Construct /></GroupIcons>
            <GroupLabel>CONSTRUCT<Caret /></GroupLabel>
          </Group>
          <Group $w={105}>
            <GroupIcons><Measure /></GroupIcons>
            <GroupLabel>INSPECT<Caret /></GroupLabel>
          </Group>
          <Group $w={94}>
            <GroupIcons><InsertImg /></GroupIcons>
            <GroupLabel>INSERT<Caret /></GroupLabel>
          </Group>
          <Group $w={97}>
            <GroupIcons><SelectIcon /></GroupIcons>
            <GroupLabel>SELECT<Caret /></GroupLabel>
          </Group>
          <Group $w={124} $pr={10} $last>
            <GroupIcons $ml={10}><PosA /><PosB /></GroupIcons>
            <GroupLabel>POSITION<Caret /></GroupLabel>
          </Group>
        </Groups>
      </RibbonMain>
    </Ribbon>

    <Canvas>
      <Model viewBox="0 0 1568 1660">
        <defs>
          <linearGradient id="steel" x1="0.2" y1="0" x2="0.7" y2="1">
            <stop offset="0" stopColor="#9a9992" />
            <stop offset="1" stopColor="#8b8880" />
          </linearGradient>
          <linearGradient id="blade" x1="0" y1="0" x2="0.4" y2="1">
            <stop offset="0" stopColor="#a0b4d2" />
            <stop offset="1" stopColor="#9cb0cd" />
          </linearGradient>
          <linearGradient id="arcA" x1="0" y1="1" x2="1" y2="0">
            <stop offset="0" stopColor="#5d8db0" stopOpacity="0" />
            <stop offset="0.5" stopColor="#5d8db0" />
            <stop offset="1" stopColor="#2d6e96" />
          </linearGradient>
          <linearGradient id="arcB" x1="0" y1="0" x2="1" y2="0">
            <stop offset="0" stopColor="#2d6e96" />
            <stop offset="0.5" stopColor="#6f9ab5" />
            <stop offset="1" stopColor="#8ea6c4" stopOpacity="0.1" />
          </linearGradient>
        </defs>
        <path
          fillRule="evenodd"
          fill="url(#steel)"
          stroke="#111"
          strokeWidth="2.600"
          d="M18 780a763.500 763.500 0 1 0 1527 0a763.500 763.500 0 1 0 -1527 0z
             M753 323L735 170C732 135 675 137 677 172L696 330
             A457 457 0 0 0 408 515L275 437C243 418 212 464 245 487L377 567
             A457 457 0 0 0 344 908L200 958C162 972 178 1030 218 1017L365 965
             A457 457 0 0 0 608 1202L560 1345C546 1387 602 1405 615 1370L663 1221
             A457 457 0 0 0 1238 780A457 457 0 0 0 753 323z"
        />
        <path
          fill="url(#blade)"
          stroke="#1c2f66"
          strokeWidth="2.800"
          d="M1145 110A764 764 0 0 1 1220 1400C1195 1412 1165 1408 1140 1397L1060 1360
             C1012 1338 985 1295 984 1245C984 1215 1000 1190 1022 1172C1160 1082 1235 930 1235 780
             C1235 620 1150 480 1020 390C990 368 972 330 984 280L1022 180C1038 135 1075 110 1120 110z"
        />
        <circle cx="1102" cy="264" r="28" fill="none" stroke="#6c80a8" strokeWidth="3" />
        <circle cx="1110" cy="1295" r="28" fill="none" stroke="#4f9ae8" strokeWidth="5" />
        <path d="M817 1228C832 1130 895 1065 965 1033" fill="none" stroke="url(#arcA)" strokeWidth="3.500" />
        <path d="M1030 1000C1110 982 1190 990 1270 1030" fill="none" stroke="url(#arcB)" strokeWidth="3.500" />
        <circle cx="995" cy="1019" r="34" fill="#fff" stroke="#7f9eb5" strokeWidth="2.500" />
        <circle cx="995" cy="1019" r="27" fill="#0696d7" />
        <circle cx="995" cy="1019" r="7" fill="#fff" />
        <g fill="#fff" stroke="#46708f" strokeWidth="2.300">
          <rect x="-6" y="-13" width="12" height="26" transform="translate(922 998) rotate(-27)" />
          <rect x="-6" y="-13" width="12" height="26" transform="translate(821 1484) rotate(60)" />
          <rect x="-6" y="-13" width="12" height="26" transform="translate(1405 1103) rotate(60)" fill="#dfe5ec" />
          <rect x="-6" y="-13" width="12" height="26" transform="translate(1303 1587) rotate(-27)" />
        </g>
      </Model>

      <LeftColumn>
        <div>
          <PanelHead $h={30}>
            <svg width="13" height="8" viewBox="0 0 13 8"><path d="M6 0v8L0 4zM13 0v8L7 4z" fill="#444" /></svg>
            <HeadTitle $ml={12}>BROWSER</HeadTitle>
            <RoundBtn><FaMinusCircle /></RoundBtn>
          </PanelHead>
          <Tree>
            <TreeRow $indent={23}>
              <Expander viewBox="0 0 22 14"><path d="M0 11L9 3v8z" fill="#333" /></Expander>
              <RootBody>
                <Eye />
                <RootSelected>
                  <ComponentIcon stroke="#555" fill="#e8e8e8" shade="#f8f8f8" />
                  <RootName>camera shutter model v0</RootName>
                </RootSelected>
                <Radio />
              </RootBody>
            </TreeRow>
            <TreeRow $indent={46}>
              <Arrow />
              <RowBody>
                <RowSlot $w={17} $color="#888" $size={16}><FaCog /></RowSlot>
                <RowText $ml={15}>Document Settings</RowText>
              </RowBody>
            </TreeRow>
            {treeRows.map(r => (
              <TreeRow key={r.key} $indent={46}>
                <Arrow />
                {r.folderOnly ? (
                  <RowBody>
                    <RowSlot><Folder /></RowSlot>
                    <RowText $ml={18}>{r.label}</RowText>
                  </RowBody>
                ) : (
                  <RowBody>
                    <Eye off={r.eyeOff} />
                    <RowSlot $ml={11}><Folder /></RowSlot>
                    <RowText $ml={18}>{r.label}</RowText>
                  </RowBody>
                )}
              </TreeRow>
            ))}
            <TreeRow $indent={46}>
              <Arrow />
              <RowBody>
                <Eye />
                <RowSlot $ml={11}><ComponentIcon /></RowSlot>
                <RowSlot $ml={12} $w={18} $color="#333" $size={15}><FaLink /></RowSlot>
                <RowText $ml={19}>blades of shutter v0:1</RowText>
                <WavyLine />
              </RowBody>
            </TreeRow>
          </Tree>
        </div>
        <PanelHead $h={31} $open>
          <HeadTitle $ml={25}>COMMENTS</HeadTitle>
          <RoundBtn><FaPlusCircle /></RoundBtn>
        </PanelHead>
      </LeftColumn>

      <Tooltip>Pick a Rotate Axis</Tooltip>
      <AngleBox>
        <Grip />
        <AngleInput><SelectedText>-10.0 deg</SelectedText></AngleInput>
        <DotMenu />
      </AngleBox>

      <ViewCube viewBox="0 0 480 360">
        <defs>
          <linearGradient id="cubeShadow" x1="1" y1="0" x2="0" y2="1">
            <stop offset="0" stopColor="#bbb" />
            <stop offset="1" stopColor="#fff" />
          </linearGradient>
        </defs>
        <path d="M262 290L420 195 395 215 230 325z" fill="url(#cubeShadow)" />
        <path d="M180 150L305 70l87 125-130 90z" fill="#ececec" stroke="#999" strokeWidth="2.500" />
        <path d="M220 155l85-45 47 80-90 50z" fill="#e2e2e2" />
        <path d="M165 135L262 288" stroke="#9a9ef5" strokeWidth="6" />
        <path d="M262 288L420 190" stroke="#ee8e8e" strokeWidth="6" />
        <text x="290" y="200" textAnchor="middle" fontSize="36" fontWeight="700" fill="#999" transform="rotate(-33 290 190)" fontFamily="Open Sans, sans-serif">FRONT</text>
        <text x="135" y="128" fontSize="44" fontWeight="700" fill="#9a9ef5" fontFamily="Liberation Sans">Z</text>
        <text x="425" y="192" fontSize="44" fontWeight="700" fill="#f29a9a" fontFamily="Liberation Sans">X</text>
      </ViewCube>

      <NavBar>
        <NavItem>
          <svg width="20" height="22" viewBox="0 0 20 22"><ellipse cx="10" cy="11" rx="9" ry="5" fill="none" stroke="#888" /><ellipse cx="10" cy="11" rx="5" ry="10" fill="#fff" stroke="#888" /><circle cx="10" cy="11" r="1.500" fill="#1e8fdd" /></svg>
          <Caret $ml={6} $color="#333" $s={3.5} />
        </NavItem>
        <NavItem $ml={10}>
          <svg width="18" height="17" viewBox="0 0 18 17"><rect x="1" y="5" width="16" height="11" fill="#ccc" stroke="#777" /><rect x="3" y="8" width="12" height="4" fill="#777" /><path d="M3 5l3-4 3 1 3-1 1 4" stroke="#777" fill="#aaa" /></svg>
        </NavItem>
        <NavItem $ml={14}><FaRegHandPaper /></NavItem>
        <NavItem $ml={12}>
          <svg width="20" height="20" viewBox="0 0 20 20"><circle cx="8" cy="8" r="6.500" fill="#eef5f5" stroke="#777" /><path d="M13 13l6 6" stroke="#444" strokeWidth="2.500" /><path d="M15 4h4M17 2v4M15 8h4" stroke="#555" /></svg>
        </NavItem>
        <NavItem $ml={12}>
          <svg width="20" height="20" viewBox="0 0 20 20"><rect x="0.500" y="0.500" width="18" height="18" fill="none" stroke="#bbb" strokeDasharray="2 1" /><circle cx="8" cy="8" r="6.500" fill="#eef5f5" stroke="#777" /><path d="M13 13l6 6" stroke="#444" strokeWidth="2.500" /></svg>
          <Caret $ml={5} $color="#333" />
        </NavItem>
        <NavItem $ml={15}>
          <svg width="20" height="20" viewBox="0 0 20 20"><rect x="0.500" y="0.500" width="19" height="14" fill="#8fb3df" stroke="#555" /><path d="M7 15h6v2h3v2H4v-2h3z" fill="#777" /></svg>
          <Caret $ml={2} $color="#333" />
        </NavItem>
        <NavItem $ml={6}>
          <svg width="20" height="18" viewBox="0 0 20 18"><rect x="0.500" y="0.500" width="19" height="17" fill="#ddd" stroke="#888" /><path d="M4 1v16M8 1v16M12 1v16M16 1v16M1 5h18M1 9h18M1 13h18" stroke="#888" /></svg>
          <Caret $ml={3} $color="#333" />
        </NavItem>
        <NavItem $ml={12}>
          <svg width="20" height="17" viewBox="0 0 20 17"><rect x="0.500" y="0.500" width="19" height="16" fill="#9dbbe0" stroke="#4d6d96" /><path d="M10 1v15M1 8.500h18" stroke="#33526f" strokeWidth="1.500" /></svg>
          <Caret $ml={3} $color="#333" />
        </NavItem>
      </NavBar>
      <SelectionCount>2 selections</SelectionCount>

      <MovePanel>
        <MoveHead>
          <RoundBtn><FaMinusCircle /></RoundBtn>
          <HeadTitle $ml={5}>MOVE/COPY</HeadTitle>
          <svg width="13" height="8" viewBox="0 0 13 8"><path d="M0 0v8l6-4zM7 0v8l6-4z" fill="#444" /></svg>
        </MoveHead>
        <FormBody>
          <FormRow>
            <FormLabel>Move Object</FormLabel>
            <Control $w={137} $pl={6}>
              <svg width="17" height="16" viewBox="0 0 17 16"><path d="M1 15V4l3-3h12v11l-3 3z" fill="#dfe4ea" stroke="#99a" /><path d="M13 15V4l3-3v11z" fill="#aab2bc" /></svg>
              <RowText $ml={7}>Components</RowText>
              <Caret $ml={17} $color="#333" />
            </Control>
          </FormRow>
          <FormRow>
            <FormLabel>Selection</FormLabel>
            <Control $w={96}><SmallPointer /><RowText $ml={7}>1 selected</RowText></Control>
            <ClearBtn><FaTimes /></ClearBtn>
          </FormRow>
          <FormRow>
            <FormLabel $w={119}>Move Type</FormLabel>
            <TypeButton>
              <svg width="16" height="16" viewBox="0 0 16 16"><circle cx="7" cy="9" r="3.500" fill="none" stroke="#333" /><path d="M7 1v11M7 9L1 15M7 9h8" stroke="#333" /><circle cx="7" cy="2" r="1.500" /><circle cx="15" cy="9" r="1.200" /><circle cx="2" cy="14" r="1.500" /></svg>
            </TypeButton>
            <TypeButton>
              <svg width="16" height="16" viewBox="0 0 16 16"><path d="M7 1v8M7 9L1 15M7 9h8" stroke="#333" /><circle cx="7" cy="2" r="1.500" /><circle cx="15" cy="9" r="1.200" /><circle cx="2" cy="14" r="1.500" /></svg>
            </TypeButton>
            <TypeButton $on>
              <svg width="16" height="16" viewBox="0 0 16 16"><path d="M11 2.500A6.500 6.500 0 1 0 14.500 8" fill="none" stroke="#143a55" strokeWidth="1.200" /><path d="M9 1l4 1-2 3" fill="none" stroke="#143a55" /></svg>
            </TypeButton>
            <TypeButton>
              <svg width="16" height="16" viewBox="0 0 16 16"><circle cx="2" cy="14" r="1.500" fill="#fff" stroke="#333" /><circle cx="14" cy="2" r="1.500" fill="#fff" stroke="#333" /><path d="M5 11l6-6M5 11l3 0M5 11l0-3" stroke="#222" strokeWidth="1.300" /></svg>
            </TypeButton>
          </FormRow>
          <FormRow>
            <FormLabel $w={119} />
            <TypeButton>
              <svg width="20" height="20" viewBox="0 0 20 20"><circle cx="18" cy="3" r="1.500" fill="#fff" stroke="#333" /><path d="M9 11l6-6M9 11l3-.5M9 11l.5-3" stroke="#222" strokeWidth="1.200" /><path d="M5 16V11" stroke="#22a052" /><path d="M5 16h6" stroke="#e02020" /><path d="M5 16l-3 3" stroke="#2070d0" /></svg>
            </TypeButton>
          </FormRow>
          <FormRow>
            <FormLabel>Axis</FormLabel>
            <Control $w={96} $blue><SmallPointer /><RowText $ml={7}>1 selected</RowText></Control>
            <ClearBtn><FaTimes /></ClearBtn>
          </FormRow>
          <FormRow>
            <FormLabel>Angle</FormLabel>
            <Control $w={137} $pl={3}>-10.0 deg</Control>
          </FormRow>
          <FormRow $off>
            <FormLabel>Create Copy</FormLabel>
            <CheckBox $off />
          </FormRow>
          <FormRow>
            <FormLabel>Capture Position</FormLabel>
            <CheckBox />
          </FormRow>
        </FormBody>
        <MoveFoot>
          <InfoIcon><FaInfoCircle /></InfoIcon>
          <DlgButton>OK</DlgButton>
          <DlgButton>Cancel</DlgButton>
        </MoveFoot>
      </MovePanel>
    </Canvas>

    <Timeline>
      <Transport $mr={18} viewBox="0 0 14 16"><path d="M0 0h3v16H0zM14 0v16L3 8z" fill="#666" /></Transport>
      <Transport $mr={18} viewBox="0 0 16 16"><path d="M11 1v14L0 8zM13 4h3v8h-3z" fill="#666" /></Transport>
      <Transport $mr={17} viewBox="0 0 14 16"><path d="M0 0v16l14-8z" fill="#666" /></Transport>
      <Transport $mr={17} viewBox="0 0 16 16"><path d="M5 1v14l11-7zM0 4h3v8H0z" fill="#666" /></Transport>
      <Transport $mr={0} viewBox="0 0 14 16"><path d="M11 0h3v16h-3zM0 0v16l11-8z" fill="#666" /></Transport>
      <Steps>
        <StepSketch /><StepExtrude /><StepSketch /><StepExtrude /><StepSketch />
        <StepIcon viewBox="0 0 20 22">
          <path d="M1 20V7l5-5h13v13l-5 5z" fill="#ccc" stroke="#666" />
          <path d="M5 15l9-9M7 17l9-9" stroke="#fff" strokeWidth="2.500" />
        </StepIcon>
        <StepBracket />
        <Marker viewBox="0 0 20 46">
          <path d="M-14 7l3-4M-9 7l3-4M-4 7l3-4" stroke="#555" strokeWidth="2.200" />
          <path d="M2 5h15v5l-5 3v2h-3v-2l-7-3z" fill="#666" />
          <rect x="9" y="14" width="3" height="32" fill="#666" />
        </Marker>
      </Steps>
      <Gear><FaCog /></Gear>
    </Timeline>

    <Taskbar>
      <svg width="34" height="28" viewBox="0 0 34 28" style={{ marginLeft: 28 }}>
        <defs>
          <linearGradient id="moon" x1="0" y1="0" x2="1" y2="1">
            <stop offset="0" stopColor="#a0a8b2" />
            <stop offset="1" stopColor="#6f7882" />
          </linearGradient>
        </defs>
        <circle cx="13" cy="13" r="13" fill="url(#moon)" />
        <path d="M15 26a4 4 0 0 1 0-8 6 6 0 0 1 11-1 4.500 4.500 0 0 1 2 9z" fill="#e6e8ea" />
      </svg>
      <TaskCenter>
        <svg width="29" height="29" viewBox="0 0 29 29">
          <defs>
            <linearGradient id="win" x1="0" y1="0" x2="1" y2="1">
              <stop offset="0" stopColor="#7fdcfa" />
              <stop offset="1" stopColor="#1f9bf0" />
            </linearGradient>
          </defs>
          <path d="M0 1a1 1 0 0 1 1-1h13v14H0zM15 0h13a1 1 0 0 1 1 1v13H15zM0 15h14v14H1a1 1 0 0 1-1-1zM15 15h14v13a1 1 0 0 1-1 1H15z" fill="url(#win)" />
        </svg>
        <SearchPill>
          <svg width="20" height="21" viewBox="0 0 20 21"><circle cx="8.500" cy="8.500" r="7" fill="none" stroke="#ddd" strokeWidth="2" /><path d="M13.500 14l4 6" stroke="#ddd" strokeWidth="2.200" /></svg>
          <SearchText>Search</SearchText>
          <svg width="44" height="30" viewBox="0 0 44 30" style={{ marginRight: 13 }}>
            <rect x="9" y="15" width="9" height="15" fill="#c98238" />
            <circle cx="5" cy="10" r="4" fill="#e8607c" /><circle cx="13" cy="5" r="4.500" fill="#ef6f8a" /><circle cx="20" cy="10" r="4" fill="#e8607c" />
            <rect x="24" y="11" width="19" height="18" fill="#9dbb34" />
            <rect x="31" y="11" width="5" height="18" fill="#f2c230" />
            <path d="M27 11l4-7 3 7 3-7 3 7" fill="none" stroke="#f2c230" strokeWidth="2" />
          </svg>
        </SearchPill>
        <TaskSlot>
          <svg width="30" height="30" viewBox="0 0 30 30"><rect x="12" y="0" width="18" height="22" rx="2" fill="#f4f4f4" /><rect x="0" y="14" width="18" height="16" rx="2" fill="#6a6a6a" opacity=".9" /><rect x="12" y="14" width="6" height="8" fill="#b0b0b0" /></svg>
        </TaskSlot>
        <TaskSlot>
          <svg width="30" height="26" viewBox="0 0 30 26"><ellipse cx="18" cy="13" rx="8" ry="12" fill="#6a6fc8" /><rect x="1" y="6" width="14" height="14" fill="#fff" /><text x="8" y="17" textAnchor="middle" fontSize="12" fontWeight="700" fill="#4b53bc" fontFamily="Liberation Sans">T</text></svg>
          <Badge>1</Badge>
        </TaskSlot>
        <TaskSlot>
          <svg width="30" height="28" viewBox="0 0 30 28"><path d="M0 2h12l3 3h15v23H0z" fill="#e0a415" /><path d="M0 7h30v19a2 2 0 0 1-2 2H2a2 2 0 0 1-2-2z" fill="#fcd34d" /><rect x="8" y="20" width="14" height="8" fill="#1e78c2" /></svg>
        </TaskSlot>
        <TaskSlot>
          <svg width="30" height="30" viewBox="0 0 30 30">
            <defs>
              <linearGradient id="edge" x1="0" y1="0" x2="1" y2="1">
                <stop offset="0" stopColor="#39c58a" />
                <stop offset="1" stopColor="#0c59a4" />
              </linearGradient>
            </defs>
            <circle cx="15" cy="15" r="15" fill="url(#edge)" />
            <path d="M8 13c4-4 12-3 14 2 1 3-1 5-4 5s-5-3-3-6c-4-1-8 3-7 8 1 3 4 7 9 8-9 1-15-5-15-11 0-3 3-5 6-6z" fill="#0f6cbd" />
            <path d="M20 16c6 3 10 1 10-1C29 7 23 1 15 1" fill="#53dd8a" opacity=".6" />
            <ellipse cx="20" cy="16" rx="4" ry="3.500" fill="#1b1b1b" />
          </svg>
        </TaskSlot>
        <TaskSlot>
          <svg width="30" height="32" viewBox="0 0 30 32"><path d="M9 7V4a3 3 0 0 1 3-3h6a3 3 0 0 1 3 3v3" fill="none" stroke="#24a3e6" strokeWidth="2" /><path d="M1 7h28v21a3 3 0 0 1-3 3H4a3 3 0 0 1-3-3z" fill="#f4f4f4" /><rect x="9" y="12" width="5.500" height="5.500" fill="#f25022" /><rect x="15.500" y="12" width="5.500" height="5.500" fill="#7fba00" /><rect x="9" y="18.500" width="5.500" height="5.500" fill="#00a4ef" /><rect x="15.500" y="18.500" width="5.500" height="5.500" fill="#ffb900" /></svg>
        </TaskSlot>
        <TaskSlot>
          <svg width="30" height="30" viewBox="0 0 30 30"><rect width="30" height="30" fill="#0f96d8" /><text x="15" y="19" textAnchor="middle" fontSize="12" fontStyle="italic" fill="#fff" fontFamily="Liberation Sans">myhp</text></svg>
        </TaskSlot>
        <TaskSlot>
          <svg width="28" height="30" viewBox="0 0 28 30"><path d="M0 0l14 7 14-7v22l-14 8L0 22z" fill="#c01818" /><path d="M7 9l7 3.500L21 9v9l-7 4-7-4z" fill="#1b1b1b" /></svg>
        </TaskSlot>
        <TaskSlot>
          <svg width="30" height="30" viewBox="0 0 30 30"><path d="M15 1a13 13 0 0 0-11 20L1 29l8-2A13.500 13.500 0 1 0 15 1z" fill="#1b1b1b" stroke="#28d366" strokeWidth="2.500" /><path d="M10 8c-2 2-2 5 1 9s7 5 9 4 2-3 1-4l-3-1-1 2c-3-1-5-3-6-6l2-1-1-3z" fill="#28d366" /></svg>
          <Badge>1</Badge>
        </TaskSlot>
        <TaskSlot>
          <svg width="30" height="30" viewBox="0 0 30 30"><path d="M21 0l8 4v22l-8 4L8 18l-5 4-3-2v-10l3-2 5 4zM21 8l-7 7 7 7z" fill="#1e8fdc" fillRule="evenodd" /></svg>
        </TaskSlot>
        <TaskSlot $active><FusionLogo size={28} /><RunDot $wide /></TaskSlot>
        <TaskSlot><FusionLogo size={28} /><RunDot /></TaskSlot>
      </TaskCenter>
      <Tray>
        <TrayItem $ml={0}>
          <svg width="14" height="9" viewBox="0 0 14 9"><path d="M1 8l6-6 6 6" fill="none" stroke="#eee" strokeWidth="1.800" /></svg>
        </TrayItem>
        <TrayItem $ml={23}>
          <svg width="20" height="18" viewBox="0 0 20 18"><path d="M4 14a3.500 3.500 0 0 1 0-7 5 5 0 0 1 9-1 4 4 0 0 1 2 8z" fill="#bcbcbc" /><circle cx="14" cy="12" r="5.500" fill="#fff" /><path d="M11 12a3 3 0 0 1 5-2M17 12a3 3 0 0 1-5 2" fill="none" stroke="#1e8fdc" strokeWidth="1.400" /></svg>
        </TrayItem>
        <TrayItem $ml={20} $size={15}><span>ENG</span><span>IN</span></TrayItem>
        <TrayItem $ml={23}>
          <svg width="20" height="15" viewBox="0 0 20 15"><path d="M1 5a13 13 0 0 1 18 0M4 8.500a9 9 0 0 1 12 0M7 11a5 5 0 0 1 6 0" fill="none" stroke="#eee" strokeWidth="1.500" /><circle cx="10" cy="13.500" r="1.500" fill="#eee" /></svg>
        </TrayItem>
        <TrayItem $ml={9}>
          <svg width="21" height="17" viewBox="0 0 21 17"><path d="M1 6h3l5-4v13l-5-4H1z" fill="none" stroke="#eee" strokeWidth="1.300" /><path d="M12 5a4 4 0 0 1 0 7" fill="none" stroke="#eee" strokeWidth="1.300" /><path d="M15 3a8 8 0 0 1 0 11" fill="none" stroke="#666" strokeWidth="1.300" /></svg>
        </TrayItem>
        <TrayItem $ml={9}>
          <svg width="21" height="13" viewBox="0 0 21 13"><rect x="1" y="1" width="17" height="11" rx="2.500" fill="none" stroke="#eee" strokeWidth="1.300" /><rect x="3" y="3" width="4" height="7" fill="#eee" /><rect x="19" y="4" width="2" height="5" rx="1" fill="#eee" /></svg>
        </TrayItem>
        <TrayItem $ml={25} $align="flex-end"><span>12:53</span><span>05-05-2024</span></TrayItem>
        <TrayItem $ml={10}>
          <svg width="17" height="20" viewBox="0 0 17 20"><path d="M8.500 0c4 0 6 3 6 7v4l2 3v1H0v-1l2-3V7c0-4 2.500-7 6.500-7z" fill="#8fe0ff" /><path d="M6 17h5a2.500 2.500 0 0 1-5 0z" fill="#8fe0ff" /></svg>
        </TrayItem>
        <TrayItem $ml={23}>
          <svg width="29" height="28" viewBox="0 0 29 28">
            <defs>
              <linearGradient id="cop" x1="0" y1="0" x2="1" y2="1">
                <stop offset="0" stopColor="#25b4e8" />
                <stop offset="0.5" stopColor="#6fc060" />
                <stop offset="1" stopColor="#e86bb0" />
              </linearGradient>
            </defs>
            <path d="M8 1h9c2 0 3 2 4 5l1 2h3c3 0 4 3 3 7l-2 5H11c-2 0-3-1-4-3L1 16c-1-1 0-3 1-5l3-7c1-2 2-3 3-3z" fill="url(#cop)" />
            <rect x="6" y="17" width="23" height="11" rx="2" fill="#f2b40c" />
            <text x="17.500" y="26" textAnchor="middle" fontSize="9" fontWeight="700" fill="#222" fontFamily="Liberation Sans">PRE</text>
          </svg>
        </TrayItem>
      </Tray>
    </Taskbar>
  </Screen>
);

export default App;
